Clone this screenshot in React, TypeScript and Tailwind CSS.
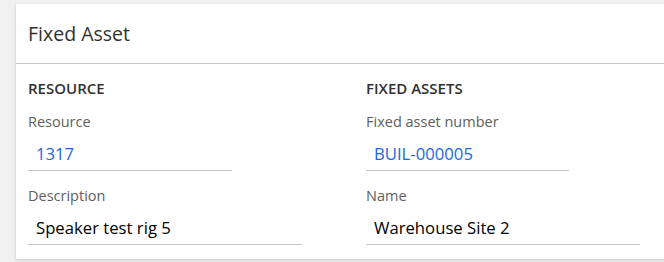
export default function App() {
  return (
    <div
      className="h-[262px] w-[664px] overflow-hidden bg-[#f0f0f0] pl-4 pt-1"
      style={{ fontFamily: '"Segoe UI", "Open Sans", sans-serif' }}
    >
      <div className="w-[720px] bg-white shadow-[0_1px_3px_rgba(0,0,0,0.18)]">
        {/* Header */}
        <div className="flex h-[60px] items-center border-b border-[#c8c6c4] px-3">
          <h1 className="text-[19.5px] text-[#323130]">Fixed Asset</h1>
        </div>

        {/* Body */}
        <div className="grid grid-cols-[338px_338px] px-3 pt-[14px] pb-[14px]">
          <FieldGroup
            title="RESOURCE"
            fields={[
              { label: "Resource", value: "1317", link: true, width: "w-[204px]" },
              { label: "Description", value: "Speaker test rig 5", width: "w-[274px]" },
            ]}
          />
          <FieldGroup
            title="FIXED ASSETS"
            fields={[
              { label: "Fixed asset number", value: "BUIL-000005", link: true, width: "w-[203px]" },
              { label: "Name", value: "Warehouse Site 2", width: "w-[274px]" },
            ]}
          />
        </div>
      </div>
    </div>
  );
}

type Field = { label: string; value: string; link?: boolean; width: string };

function FieldGroup({ title, fields }: { title: string; fields: Field[] }) {
  return (
    <div>
      <div className="text-[15px] font-semibold leading-5 text-[#323130]">{title}</div>
      <div className="mt-[14px] flex flex-col gap-[15px]">
        {fields.map((f) => (
          <div key={f.label}>
            <div className="text-[14.5px] leading-5 text-[#605e5c]">{f.label}</div>
            <div
              className={`${f.width} mt-[6px] flex h-[33px] items-center border-b border-[#c8c6c4] px-2 text-[16.7px] ${
                f.link ? "text-[#2266e3]" : "text-black"
              }`}
            >
              {f.value}
            </div>
          </div>
        ))}
      </div>
    </div>
  );
}
